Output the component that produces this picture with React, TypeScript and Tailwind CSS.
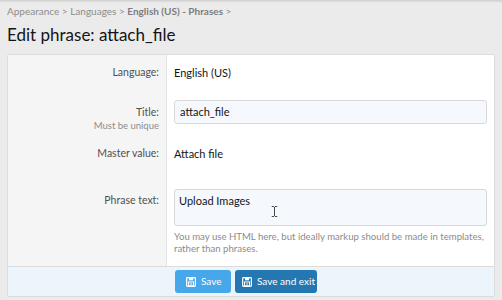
const font = { fontFamily: 'Lato, "Open Sans", sans-serif' };

// floppy icon used on the footer buttons
const SaveIcon = () => (
  <svg viewBox="0 0 12 12" className="w-[10px] h-[10px]" fill="none">
    <rect x="0.75" y="0.75" width="10.5" height="10.5" rx="1" stroke="currentColor" strokeWidth="1.5" />
    <rect x="3.5" y="1" width="5" height="3" fill="currentColor" />
    <rect x="3" y="6" width="6" height="4.5" stroke="currentColor" strokeWidth="1.2" />
    <rect x="5.4" y="7.2" width="1.2" height="2.2" fill="currentColor" />
  </svg>
);

const Row = ({ label, hint, labelPad, children, className = "" }: { label: string; hint?: string; labelPad: string; children: React.ReactNode; className?: string }) => (
  <div className={`flex ${className}`}>
    <div className={`w-[159px] shrink-0 bg-[#f5f5f5] border-r border-[#e3e3e3] pr-[7px] text-right ${labelPad}`}>
      <div className="text-[10.5px] text-[#505050] leading-[17px]">{label}</div>
      {hint && <div className="text-[9.5px] text-[#8c8c8c] leading-[10px]">{hint}</div>}
    </div>
    <div className="flex-1 pl-[7px] pr-[7px]">{children}</div>
  </div>
);

export default function App() {
  return (
    <div className="w-[502px] h-[300px] bg-[#ebebeb] overflow-hidden relative" style={font}>
      <div className="absolute inset-x-0 top-0 h-[3px] bg-gradient-to-b from-[#cfcfcf] to-[#ebebeb]" />
      <div className="px-[7px] pt-[4px] text-[10px] text-[#8c8c8c] leading-[15px]">
        Appearance &gt; Languages &gt; <span className="font-bold text-[#7d7d7d]">English (US) - Phrases</span> &gt;
      </div>
      <h1 className="px-[7px] mt-[5px] text-[17px] leading-[22px] text-[#141414]">Edit phrase: attach_file</h1>
      <div className="mx-[7px] mt-[8px] w-[488px] bg-white border border-[#dcdcdc] rounded-[2px] overflow-hidden">
        <Row label="Language:" labelPad="pt-[9px]" className="h-[36px]">
          <div className="pt-[9px] text-[11px] text-[#141414] leading-[17px]">English (US)</div>
        </Row>
        <Row label="Title:" hint="Must be unique" labelPad="pt-[13px]" className="h-[48px]">
          <div className="mt-[9px] h-[24px] border border-[#d8d8d8] rounded-[3px] bg-[#f5f9fd] px-[5px] text-[11px] text-[#141414] leading-[22px]">attach_file</div>
        </Row>
        <Row label="Master value:" labelPad="pt-[6px]" className="h-[41px]">
          <div className="pt-[6px] text-[11px] text-[#141414] leading-[17px]">Attach file</div>
        </Row>
        <Row label="Phrase text:" labelPad="pt-[12px]" className="h-[86px]">
          <div className="relative mt-[9px] h-[37px] border border-[#d8d8d8] rounded-[3px] bg-[#f5f9fd] px-[4px] pt-[2px] text-[11px] text-[#141414] leading-[17px]">
            Upload Images
            <svg viewBox="0 0 7 12" className="absolute left-[96px] top-[16px] w-[7px] h-[11px]" fill="none" stroke="#333" strokeWidth="1">
              <path d="M0.5 0.5h2.5M4 0.5h2.5M3.5 1v10M0.5 11.5h2.5M4 11.5h2.5" />
            </svg>
          </div>
          <div className="mt-[5px] text-[9.6px] text-[#8c8c8c] leading-[12px]">
            You may use HTML here, but ideally markup should be made in templates, rather than phrases.
          </div>
        </Row>
        <div className="flex h-[30px] border-t border-[#dcdcdc] bg-[#edf5fc]">
          <div className="w-[160px] shrink-0" />
          <div className="flex items-center gap-[4px] pl-[7px]">
            <button className="flex items-center gap-[5px] h-[23px] w-[56px] pl-[11px] rounded-[3px] bg-[#47a7eb] text-white text-[10px]">
              <SaveIcon /> Save
            </button>
            <button className="flex items-center gap-[5px] h-[23px] w-[82px] pl-[7px] rounded-[3px] bg-[#2577b1] text-white text-[10px]">
              <SaveIcon /> Save and exit
            </button>
          </div>
        </div>
      </div>
    </div>
  );
}
